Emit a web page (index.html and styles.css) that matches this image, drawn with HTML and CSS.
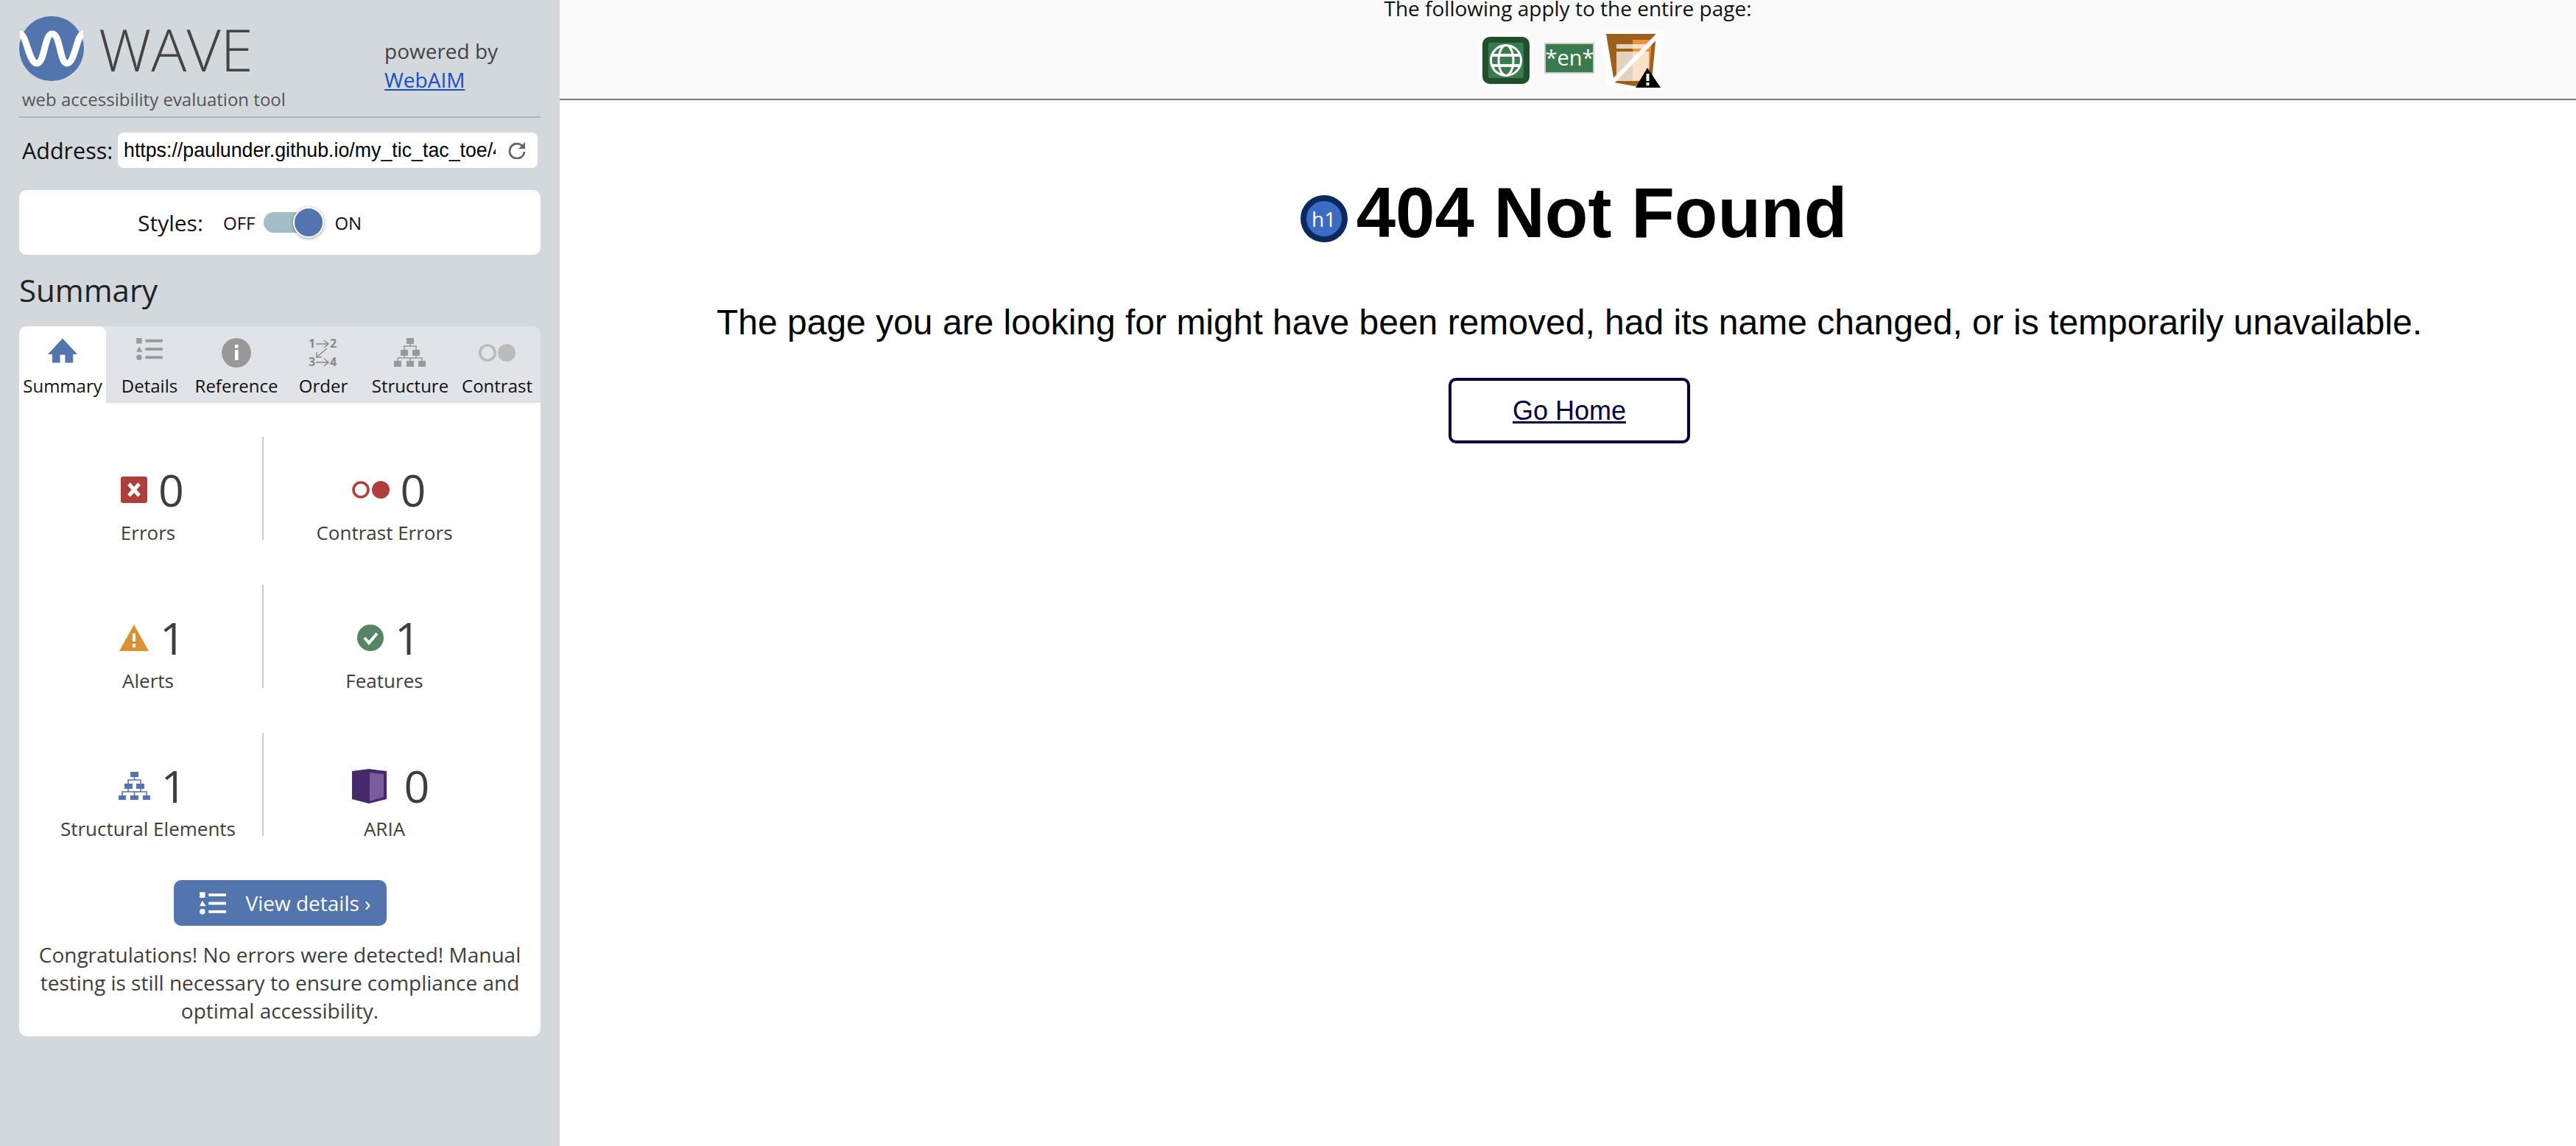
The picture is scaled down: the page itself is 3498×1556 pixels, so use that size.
FILE: index.html
```html
<!DOCTYPE html>
<html lang="en">
  <head>
    <meta charset="UTF-8" />
    <meta name="viewport" content="width=device-width, initial-scale=1.0" />
    <title>WAVE Report: 404 Not Found</title>
    <link rel="stylesheet" href="styles.css">
  </head>
  <body>
    <div class="layout">
      <aside class="sidebar">
        <div class="brand">
          <div class="brand-left">
            <div class="brand-logo">
              <svg class="logo-mark" viewBox="0 0 88 88">
                <circle cx="44" cy="44" r="44" fill="#5275ae" />
                <path d="M1 24 C10 24 13 64 24 64 C35 64 34 24 45 24 C56 24 55 64 65 64 C76 64 78 24 87 24" fill="none" stroke="#fff" stroke-width="9" />
              </svg>
              <span class="logo-name">WAVE</span>
            </div>
            <div class="tagline">web accessibility evaluation tool</div>
          </div>
          <div class="powered">
            <div>powered by</div>
            <a href="#">WebAIM</a>
          </div>
        </div>

        <div class="address-row">
          <label class="address-label" for="address">Address:</label>
          <div class="address-box">
            <input id="address" class="address-input" type="text" value="https://paulunder.github.io/my_tic_tac_toe/404" />
            <svg class="reload-icon" viewBox="0 0 26 24">
              <path d="M20 6 A10 10 0 1 0 23 14" fill="none" stroke="#666" stroke-width="2.8" />
              <path d="M24 1 L24 10 L15 10 Z" fill="#666" />
            </svg>
          </div>
        </div>

        <div class="styles-card">
          <span class="styles-label">Styles:</span>
          <span class="styles-state">OFF</span>
          <span class="toggle"><span class="toggle-knob"></span></span>
          <span class="styles-state">ON</span>
        </div>

        <h2 class="summary-title">Summary</h2>

        <nav class="tabs">
          <div class="tab active">
            <svg width="40" height="34" viewBox="0 0 41 34">
              <path d="M20.5 0 L41 22 L35 22 L35 34 L24 34 L24 23 L17 23 L17 34 L6 34 L6 22 L0 22 Z" fill="#5275ae" />
            </svg>
            <span>Summary</span>
          </div>
          <div class="tab">
            <svg width="36" height="30" viewBox="0 0 38 32">
              <g fill="#999">
                <rect x="0" y="0" width="8" height="8" />
                <path d="M4 12 L9 20 L0 20 Z" />
                <circle cx="4" cy="28" r="4" />
                <rect x="13" y="2" width="25" height="4" />
                <rect x="13" y="14" width="25" height="4" />
                <rect x="13" y="26" width="25" height="4" />
              </g>
            </svg>
            <span>Details</span>
          </div>
          <div class="tab">
            <svg width="40" height="40" viewBox="0 0 40 40">
              <circle cx="20" cy="20" r="20" fill="#999" />
              <rect x="18" y="9" width="4.5" height="4.5" fill="#fff" />
              <rect x="18" y="16" width="4.5" height="14" fill="#fff" />
            </svg>
            <span>Reference</span>
          </div>
          <div class="tab">
            <svg class="order-icon" width="40" height="48" viewBox="0 -4 40 48">
              <g fill="#888" font-family="Open Sans, sans-serif" font-size="16" font-weight="700">
                <text x="0" y="13">1</text>
                <text x="29" y="13">2</text>
                <text x="0" y="38">3</text>
                <text x="29" y="38">4</text>
              </g>
              <g fill="none" stroke="#888" stroke-width="1.5">
                <path d="M10 8 H26 M21 3 L27 8 L21 13" />
                <path d="M10 33 H26 M21 28 L27 33 L21 38" />
                <path d="M25 14 L11 26 M11 19 V26 H18" />
              </g>
            </svg>
            <span>Order</span>
          </div>
          <div class="tab">
            <svg width="44" height="39" viewBox="0 0 44 39">
              <g fill="#999">
                <rect x="17" y="0" width="10" height="8" />
                <rect x="9" y="16" width="10" height="8" />
                <rect x="25" y="16" width="10" height="8" />
                <rect x="0" y="31" width="10" height="8" />
                <rect x="17" y="31" width="10" height="8" />
                <rect x="33" y="31" width="10" height="8" />
              </g>
              <path d="M22 8 V11 H14 V16 M22 11 H30 V16 M14 24 V27 H5 V31 M14 27 H38 V31 M22 27 V31 M30 24 V27" fill="none" stroke="#999" stroke-width="1.6" />
            </svg>
            <span>Structure</span>
          </div>
          <div class="tab">
            <svg width="50" height="40" viewBox="0 0 50 40">
              <circle cx="12" cy="20" r="10.2" fill="none" stroke="#bbb" stroke-width="3.6" />
              <circle cx="38" cy="20" r="12" fill="#bbb" />
            </svg>
            <span>Contrast</span>
          </div>
        </nav>

        <section class="summary-card">
          <div class="stats">
            <div class="stat stat-left">
              <div class="stat-count">
                <svg width="36" height="36" viewBox="0 0 36 36">
                  <rect width="36" height="36" rx="3" fill="#ae3f3d" />
                  <path d="M11 10 L25 26 M25 10 L11 26" stroke="#fff" stroke-width="5" />
                </svg>
                <span class="stat-number">0</span>
              </div>
              <div class="stat-label">Errors</div>
            </div>
            <div class="stat">
              <div class="stat-count">
                <svg width="51" height="24" viewBox="0 0 51 24">
                  <circle cx="12" cy="12" r="10" fill="none" stroke="#ae3f3d" stroke-width="3.6" />
                  <circle cx="39" cy="12" r="12" fill="#ae3f3d" />
                </svg>
                <span class="stat-number">0</span>
              </div>
              <div class="stat-label">Contrast Errors</div>
            </div>
            <div class="stat stat-left">
              <div class="stat-count">
                <svg width="40" height="36" viewBox="0 0 40 36">
                  <path d="M20 0 L40 36 L0 36 Z" fill="#dc9139" />
                  <rect x="18" y="12" width="4" height="11" fill="#fff" />
                  <rect x="18" y="26" width="4" height="5" fill="#fff" />
                </svg>
                <span class="stat-number">1</span>
              </div>
              <div class="stat-label">Alerts</div>
            </div>
            <div class="stat">
              <div class="stat-count">
                <svg width="36" height="36" viewBox="0 0 36 36">
                  <circle cx="18" cy="18" r="18" fill="#558467" />
                  <path d="M10 18 L16 25 L27 12" fill="none" stroke="#fff" stroke-width="4" />
                </svg>
                <span class="stat-number">1</span>
              </div>
              <div class="stat-label">Features</div>
            </div>
            <div class="stat stat-left">
              <div class="stat-count">
                <svg width="43" height="38" viewBox="0 0 43 38">
                  <g fill="#5275ae">
                    <rect x="16" y="0" width="11" height="7" />
                    <rect x="8" y="16" width="11" height="7" />
                    <rect x="24" y="16" width="11" height="7" />
                    <rect x="0" y="32" width="10" height="6" />
                    <rect x="16" y="32" width="11" height="6" />
                    <rect x="33" y="32" width="10" height="6" />
                  </g>
                  <path d="M21.500 7 V11 H13 V16 M21.500 11 H30 V16 M13 23 V27 H5 V32 M13 27 H38 V32 M21.500 27 V32 M30 23 V27" fill="none" stroke="#5275ae" stroke-width="1.6" />
                </svg>
                <span class="stat-number">1</span>
              </div>
              <div class="stat-label">Structural Elements</div>
            </div>
            <div class="stat">
              <div class="stat-count stat-count-aria">
                <svg width="47" height="47" viewBox="0 0 47 47">
                  <path d="M0 3 L23 0 L47 3 V41 L23 47 L0 41 Z" fill="#45296b" />
                  <path d="M24 5 L43 7 V38 L24 44 Z" fill="#7a5e9c" />
                </svg>
                <span class="stat-number">0</span>
              </div>
              <div class="stat-label">ARIA</div>
            </div>
          </div>

          <div class="details-wrap">
            <a class="details-button" href="#">
              <svg width="36" height="31" viewBox="0 0 38 32">
                <g fill="#fff">
                  <rect x="0" y="0" width="8" height="8" />
                  <path d="M4 12 L9 20 L0 20 Z" />
                  <circle cx="4" cy="28" r="4" />
                  <rect x="13" y="2" width="25" height="4" />
                  <rect x="13" y="14" width="25" height="4" />
                  <rect x="13" y="26" width="25" height="4" />
                </g>
              </svg>
              <span>View details ›</span>
            </a>
          </div>

          <p class="summary-note">Congratulations! No errors were detected! Manual testing is still necessary to ensure compliance and optimal accessibility.</p>
        </section>
      </aside>

      <div class="report">
        <div class="page-notice">
          <div class="page-notice-text">The following apply to the entire page:</div>
          <div class="page-icons">
            <svg class="page-globe" width="76" height="76" viewBox="0 0 76 76">
              <rect x="0" y="0" width="76" height="76" rx="18" fill="#fff" />
              <rect x="6" y="6" width="64" height="64" rx="10" fill="#1f4f2b" />
              <rect x="14" y="14" width="48" height="48" rx="2" fill="#3a7a4f" />
              <g fill="none" stroke="#fff" stroke-width="3">
                <circle cx="38" cy="38" r="20.500" />
                <ellipse cx="38" cy="38" rx="10" ry="20.500" />
                <path d="M20 31 H56 M20 45 H56" stroke-width="4" />
              </g>
            </svg>
            <span class="lang-badge">*en*</span>
            <svg class="page-shield" width="86" height="84" viewBox="0 0 86 84">
              <path d="M0 0 H86 L79 75 L41 84 L7 76 Z" fill="#fff" />
              <path d="M7 6 H75 L69 70 L46 77 L18 72 Z" fill="#9c5f1e" />
              <path d="M43 14 H69 L65 66 L43 70 Z" fill="#f0923a" />
              <path d="M21 20 H65 V26 H21 Z M21 30 H65 V70 H21 Z" fill="#fff" fill-opacity="0.72" />
              <path d="M79 6 L14 73" stroke="#fff" stroke-width="6" />
              <path d="M47 79 L63 52 L81 79 Z" fill="#000" />
              <rect x="61.500" y="60" width="4" height="10" fill="#fff" />
              <rect x="61.500" y="72" width="4" height="4" fill="#fff" />
            </svg>
          </div>
        </div>

        <main class="page-content">
          <h1 class="page-title">
            <span class="h1-badge">h1</span>404 Not Found
          </h1>
          <p class="page-text">The page you are looking for might have been removed, had its name changed, or is temporarily unavailable.</p>
          <a class="home-link" href="#">Go Home</a>
        </main>
      </div>
    </div>
  </body>
</html>
```

FILE: styles.css
```css
* {
  box-sizing: border-box;
}
html,
body {
  height: 100%;
}
body {
  margin: 0;
  background-color: white;
  font-family: "Open Sans", sans-serif;
  color: #3e3e3e;
}
.layout {
  display: flex;
  min-height: 100%;
}

/* sidebar */
.sidebar {
  width: 760px;
  flex-shrink: 0;
  padding: 0 26px;
  background-color: #d3d8dc;
}
.brand {
  display: flex;
  height: 160px;
  padding-top: 22px;
  border-bottom: 2px solid #b0b5b9;
}
.brand-left {
  width: 496px;
}
.brand-logo {
  display: flex;
  align-items: center;
  height: 88px;
}
.logo-mark {
  width: 88px;
  height: 88px;
  flex-shrink: 0;
}
.logo-name {
  margin-left: 20px;
  font-size: 80px;
  font-weight: 300;
  line-height: 88px;
  color: #444;
}
.tagline {
  margin: 10px 0 0 4px;
  font-size: 24px;
  line-height: 30px;
  color: #555;
}
.powered {
  padding-top: 28px;
  font-size: 28px;
  line-height: 39px;
  color: #444;
}
.powered a {
  color: #1a4fc4;
}

.address-row {
  display: flex;
  align-items: center;
  margin-top: 20px;
}
.address-label {
  width: 134px;
  padding-left: 4px;
  font-size: 30.500px;
  color: #111;
}
.address-box {
  display: flex;
  align-items: center;
  width: 570px;
  height: 48px;
  padding: 0 15px 0 8px;
  border-radius: 8px;
  background-color: white;
}
.address-input {
  flex: 1;
  min-width: 0;
  padding: 0;
  border: none;
  outline: none;
  font-family: "Liberation Sans", sans-serif;
  font-size: 26.750px;
  color: #000;
}
.reload-icon {
  width: 26px;
  height: 24px;
  margin-left: 16px;
}

.styles-card {
  display: flex;
  align-items: center;
  height: 88px;
  margin-top: 30px;
  padding-left: 161px;
  border-radius: 10px;
  background-color: white;
  color: #111;
}
.styles-label {
  width: 116px;
  font-size: 30px;
}
.styles-state {
  font-size: 24px;
}
.toggle {
  position: relative;
  width: 82px;
  height: 28px;
  margin: 0 14px 0 12px;
  border-radius: 14px;
  background-color: #a4bec8;
}
.toggle-knob {
  position: absolute;
  top: -7px;
  right: 0;
  width: 42px;
  height: 42px;
  border: 2px solid white;
  border-radius: 50%;
  background-color: #5275ae;
  box-shadow: 0 1px 4px rgba(0, 0, 0, 0.4);
}

.summary-title {
  height: 97px;
  margin: 0;
  padding-top: 19px;
  font-size: 42px;
  font-weight: 400;
  line-height: 58px;
  color: #222;
}

.tabs {
  display: grid;
  grid-template-columns: repeat(6, 1fr);
  height: 104px;
  border-radius: 10px 10px 0 0;
  background-color: #e0e3e8;
}
.tab {
  display: flex;
  flex-direction: column;
  align-items: center;
  padding: 16px 0 5px;
  font-size: 24px;
  color: #111;
}
.tab.active {
  border-radius: 10px 10px 0 0;
  background-color: white;
}
.tab span {
  margin-top: auto;
  line-height: 36px;
  white-space: nowrap;
}
.order-icon {
  margin: -4px 0 -4px;
}

.summary-card {
  height: 860px;
  padding-top: 46px;
  border-radius: 0 0 10px 10px;
  background-color: white;
}
.stats {
  display: grid;
  grid-template-columns: 312px 328px;
  grid-auto-rows: 140px;
  row-gap: 61px;
  margin-left: 20px;
}
.stat {
  display: flex;
  flex-direction: column;
  align-items: center;
  padding-top: 48px;
}
.stat-left {
  border-right: 2px solid #ccc;
}
.stat-count {
  display: flex;
  align-items: center;
  justify-content: center;
  gap: 15px;
  height: 48px;
  padding-left: 12px;
}
.stat-count-aria {
  gap: 24px;
  padding-left: 17px;
}
.stat-number {
  font-size: 61px;
  line-height: 48px;
  color: #3e3e3e;
}
.stat-label {
  margin-top: 15px;
  font-size: 26px;
  line-height: 38px;
  white-space: nowrap;
}

.details-wrap {
  display: flex;
  justify-content: center;
  margin-top: 60px;
}
.details-button {
  display: flex;
  align-items: center;
  gap: 27px;
  width: 289px;
  height: 62px;
  padding-left: 35px;
  border-radius: 10px;
  background-color: #5275ae;
  color: white;
  font-size: 28px;
  text-decoration: none;
}
.summary-note {
  margin: 20px 10px 0;
  font-size: 28px;
  line-height: 38px;
  text-align: center;
}

/* page under test */
.report {
  flex: 1;
  min-width: 0;
}
.page-notice {
  height: 136px;
  border-bottom: 2px solid #7a7f78;
  background-color: #f9f9f9;
  text-align: center;
  color: #111;
}
.page-notice-text {
  height: 44px;
  font-size: 28px;
  line-height: 22px;
}
.page-icons {
  display: flex;
  justify-content: center;
  align-items: flex-start;
  padding-left: 8px;
}
.page-globe {
  margin-right: 14px;
}
.lang-badge {
  width: 68px;
  height: 42px;
  margin-top: 14px;
  border: 2px solid #ccc;
  background-color: #3a7a4f;
  font-size: 29px;
  line-height: 36px;
  color: white;
}
.page-shield {
  margin: -4px 0 0 9px;
}

.page-content {
  display: flex;
  flex-direction: column;
  align-items: center;
  padding-left: 4px;
  font-family: "Liberation Sans", sans-serif;
  color: #000;
}
.page-title {
  display: flex;
  align-items: center;
  height: 110px;
  margin: 98px 0 0;
  padding-left: 12px;
  font-size: 96px;
  font-weight: 700;
  line-height: 110px;
}
.h1-badge {
  display: flex;
  align-items: center;
  justify-content: center;
  width: 64px;
  height: 64px;
  margin: 16px 12px 0 0;
  border: 8px solid #0a2a5e;
  border-radius: 50%;
  background-color: #3a6cc4;
  font-family: "Open Sans", sans-serif;
  font-size: 28px;
  font-weight: 400;
  color: white;
}
.page-text {
  margin: 62px 0 0;
  font-size: 48px;
  line-height: 64px;
}
.home-link {
  display: flex;
  align-items: center;
  justify-content: center;
  width: 328px;
  height: 89px;
  margin-top: 43px;
  border: 4px solid #000040;
  border-radius: 10px;
  font-size: 36px;
  color: #000040;
}
```
